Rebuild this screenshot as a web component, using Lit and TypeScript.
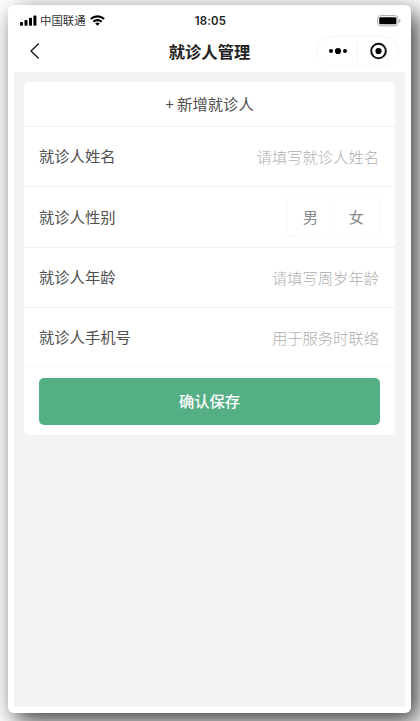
import { LitElement, html, css, svg } from "lit";
import { customElement, property } from "lit/decorators.js";

const statusIcons = {
  signal: svg`<rect x="0" y="7" width="3" height="3.8" rx=".7"/><rect x="4.5" y="5" width="3" height="5.8" rx=".7"/><rect x="9" y="2.8" width="3" height="8" rx=".7"/><rect x="13.4" y=".5" width="3" height="10.3" rx=".7"/>`,
};

@customElement("form-row")
export class FormRow extends LitElement {
  @property() label = "";
  @property() placeholder = "";

  static styles = css`
    :host {
      display: flex;
      align-items: center;
      justify-content: space-between;
      box-sizing: border-box;
      padding: 0 15px;
      font-size: 15.3px;
      line-height: 22px;
    }
    .label { color: #505050; margin-bottom: 3px; }
    .hint { color: #b0b0b0; margin: 0 1px 2px 0; font-weight: 300; }
  `;

  render() {
    return html`
      <span class="label">${this.label}</span>
      <slot><span class="hint">${this.placeholder}</span></slot>
    `;
  }
}

@customElement("app-root")
export class AppRoot extends LitElement {
  static styles = css`
    :host {
      display: block;
      box-sizing: border-box;
      width: 420px;
      height: 721px;
      padding: 5px 9px 8px 8px;
      overflow: hidden;
      background: #fff;
      font-family: "Noto Sans CJK SC", sans-serif;
    }
    .phone {
      display: flex;
      flex-direction: column;
      box-sizing: border-box;
      height: 708px;
      padding: 0 6px 6px;
      border-radius: 6px;
      background: #fff;
      box-shadow: 7px 8px 25px rgba(0, 0, 0, 0.78);
    }
    .status {
      display: grid;
      grid-template-columns: 1fr auto 1fr;
      align-items: center;
      height: 31px;
      padding: 0 4px 0 6px;
      font-size: 11.4px;
      line-height: 16px;
      color: #333;
    }
    .carrier { display: flex; align-items: center; gap: 4px; }
    .carrier svg { display: block; }
    .carrier-name { margin: -1px 0 1px -1px; }
    .clock {
      font: 600 11.4px/16px Inter, sans-serif;
      letter-spacing: 0.2px;
      color: #222;
    }
    .battery { justify-self: end; display: block; }
    .nav {
      display: grid;
      grid-template-columns: 83px 1fr 83px;
      align-items: center;
      height: 30px;
      margin-bottom: 6px;
      padding: 0 6px;
    }
    .title {
      justify-self: center;
      font-size: 16.3px;
      line-height: 24px;
      font-weight: 700;
      color: #222;
    }
    .back { display: block; margin-left: 9px; }
    .capsule {
      display: flex;
      align-items: center;
      box-sizing: border-box;
      width: 83px;
      height: 30px;
      border: 1px solid #f6f6f6;
      border-radius: 15px;
    }
    .capsule svg { display: block; flex: 1; }
    .divider { width: 1px; height: 19px; background: #f4f4f4; }
    .page { flex: 1; padding: 10px; background: #f3f3f3; }
    .card {
      display: grid;
      grid-template-rows: 45px 60px 61px 60px 60px auto;
      height: 353px;
      border-radius: 5px;
      background: #fff;
    }
    .line { border-bottom: 1px solid #f0f0f0; }
    .faint { border-bottom: 1px solid #fafafa; }
    .add {
      display: flex;
      align-items: center;
      justify-content: center;
      padding-bottom: 2px;
      font-size: 15.3px;
      line-height: 22px;
      color: #505050;
    }
    .choices {
      display: flex;
      box-sizing: border-box;
      width: 93px;
      height: 41px;
      margin-bottom: 1px;
      border: 1px solid #f9f9f9;
      border-radius: 4px;
      color: #8a8a8a;
    }
    .choice { flex: 1; display: grid; place-items: center; padding-bottom: 2px; }
    .choice + .choice { border-left: 1px solid #f9f9f9; }
    .save {
      height: 47px;
      margin: 10px 15px 0;
      padding: 0 0 3px;
      border: 0;
      border-radius: 5px;
      background: #54af85;
      color: #fff;
      font: 500 15.3px/22px "Noto Sans CJK SC", sans-serif;
    }
  `;

  render() {
    return html`
      <div class="phone">
        <div class="status">
          <div class="carrier">
            <svg width="17" height="11" viewBox="0 0 17 11" fill="#000">${statusIcons.signal}</svg>
            <span class="carrier-name">中国联通</span>
            <svg width="15" height="11" viewBox="0 0 15 11" fill="none" stroke="#000" stroke-width="2.1">
              <path d="M.9 4.1a9.3 9.3 0 0 1 13.2 0"/>
              <path d="M3.4 6.8a5.8 5.8 0 0 1 8.2 0"/>
              <path d="M7.5 10.8 5.2 8.6a3.3 3.3 0 0 1 4.6 0Z" fill="#000" stroke="none"/>
            </svg>
          </div>
          <div class="clock">18:05</div>
          <svg class="battery" width="24" height="12" viewBox="0 0 24 12">
            <rect x=".6" y=".6" width="20.4" height="10.3" rx="3" fill="none" stroke="#aaa"/>
            <rect x="2.2" y="2.2" width="17.2" height="7.1" rx="1.2" fill="#000"/>
            <path d="M22 3.9q1.5.5 1.5 1.9T22 7.7Z" fill="#aaa"/>
          </svg>
        </div>
        <div class="nav">
          <svg class="back" width="12" height="18" viewBox="0 0 12 18" fill="none" stroke="#111" stroke-width="1.3">
            <path d="M9.7 1.5 2 9l7.7 7.5"/>
          </svg>
          <div class="title">就诊人管理</div>
          <div class="capsule">
            <svg height="20" viewBox="0 0 40 20">
              <circle cx="14" cy="10" r="2"/><circle cx="21" cy="10" r="3.1"/><circle cx="28" cy="10" r="2"/>
            </svg>
            <span class="divider"></span>
            <svg height="20" viewBox="0 0 40 20">
              <circle cx="20.5" cy="10" r="7.3" fill="none" stroke="#111" stroke-width="2"/>
              <circle cx="20.5" cy="10" r="3.1"/>
            </svg>
          </div>
        </div>
        <main class="page">
          <section class="card">
            <div class="add line">+ 新增就诊人</div>
            <form-row class="line" label="就诊人姓名" placeholder="请填写就诊人姓名"></form-row>
            <form-row class="line" label="就诊人性别">
              <div class="choices">
                <span class="choice">男</span><span class="choice">女</span>
              </div>
            </form-row>
            <form-row class="line" label="就诊人年龄" placeholder="请填写周岁年龄"></form-row>
            <form-row class="faint" label="就诊人手机号" placeholder="用于服务时联络"></form-row>
            <button class="save">确认保存</button>
          </section>
        </main>
      </div>
    `;
  }
}
